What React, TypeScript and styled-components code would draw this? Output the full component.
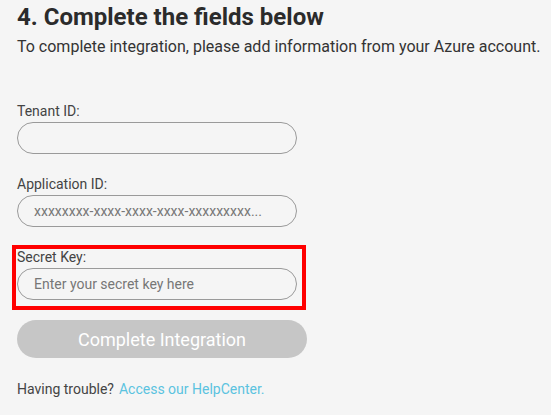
import styled, { createGlobalStyle } from "styled-components";

const Global = createGlobalStyle`
  html, body {
    margin: 0;
    padding: 0;
    background: #f5f5f5;
    font-family: Roboto, "Liberation Sans", Arial, sans-serif;
  }
`

const Page = styled.div`
  padding: 3px 17px 0;
  color: #333;
`
const Title = styled.h1`
  margin: 0;
  font-size: 24px;
  line-height: 29px;
  font-weight: 700;
  color: #2b2b2b;
`
const Lead = styled.p`
  margin: 4px 0 0;
  font-size: 16px;
  line-height: 22px;
  white-space: nowrap;
  color: #333;
`
const Form = styled.form`
  display: flex;
  flex-direction: column;
  margin-top: 45px;
`
const Field = styled.div<{ $highlight?: boolean }>`
  display: flex;
  flex-direction: column;
  gap: 3px;
  margin-bottom: ${(p) => (p.$highlight ? "14px" : "22px")};
  ${(p) =>
    p.$highlight &&
    `
    width: 286px;
    box-sizing: border-box;
    margin-left: -1px;
    padding: 0 0 6px 1px;
    outline: 4px solid #ff0000;
  `}
`
const Label = styled.label`
  font-size: 14px;
  line-height: 16px;
  color: #444;
`
const Input = styled.input`
  width: 280px;
  height: 32px;
  box-sizing: border-box;
  border: 1px solid #9a9a9a;
  border-radius: 16px;
  background: #f5f5f5;
  padding: 0 16px;
  font-family: inherit;
  font-size: 14px;
  color: #333;
  outline: none;
  &::placeholder {
    color: #777;
  }
`
const Submit = styled.button`
  width: 290px;
  height: 38px;
  border: none;
  border-radius: 19px;
  background: #c6c6c6;
  color: #fff;
  font-family: inherit;
  font-size: 18px;
  cursor: default;
`
const Help = styled.p`
  margin: 23px 0 0;
  font-size: 14px;
  line-height: 16px;
  color: #444;
  a {
    color: #5bc3e0;
    text-decoration: none;
    margin-left: 5px;
  }
`

export default function App() {
  return (
    <Page>
      <Global />
      <Title>4. Complete the fields below</Title>
      <Lead>To complete integration, please add information from your Azure account.</Lead>
      <Form onSubmit={(e) => e.preventDefault()}>
        <Field>
          <Label>Tenant ID:</Label>
          <Input type="text" />
        </Field>
        <Field>
          <Label>Application ID:</Label>
          <Input type="text" placeholder="xxxxxxxx-xxxx-xxxx-xxxx-xxxxxxxxx..." />
        </Field>
        <Field $highlight>
          <Label>Secret Key:</Label>
          <Input type="text" placeholder="Enter your secret key here" />
        </Field>
        <Submit type="submit" disabled>Complete Integration</Submit>
      </Form>
      <Help>
        Having trouble?<a href="#">Access our HelpCenter.</a>
      </Help>
    </Page>
  )
}
